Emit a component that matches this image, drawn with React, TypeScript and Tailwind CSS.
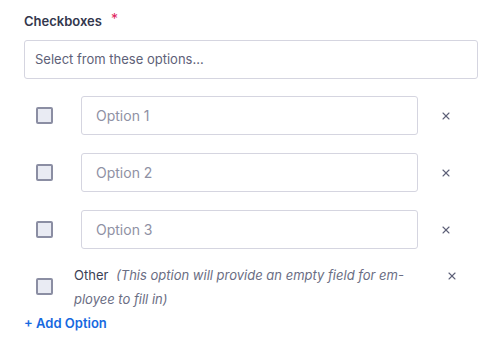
import {X} from 'lucide-react'

const options = ['Option 1', 'Option 2', 'Option 3']

function Box() {
  return <div className="h-[17px] w-[17px] shrink-0 rounded-[2px] border-2 border-[#8b8ea3] bg-[#e9ebf3]" />
}

export default function App() {
  return (
    <div
      className="w-[503px] h-[352px] bg-white px-6 pt-[11px] text-[13px] text-[#2f3347]"
      style={{fontFamily: 'Inter, sans-serif'}}
    >
      <div className="flex items-start gap-[9px] leading-[20px]">
        <span className="font-semibold text-[#33374d]">Checkboxes</span>
        <span className="text-[#e0245e] text-[14px] leading-[16px]">*</span>
      </div>

      <div className="mt-[9px] flex h-[39px] w-[454px] items-center rounded-[3px] border border-[#d5d5e0] px-[10px] text-[#5e6178]">
        Select from these options...
      </div>

      <div className="mt-[17px] flex flex-col gap-[18px]">
        {options.map((o) => (
          <div key={o} className="flex items-center">
            <div className="ml-3 mr-7">
              <Box />
            </div>
            <div className="flex h-[39px] w-[337px] items-center rounded-[3px] border border-[#d5d5e0] px-[14px] text-[14px] text-[#8f91a4]">
              {o}
            </div>
            <X className="ml-[22px] h-[12px] w-[12px] text-[#5e6178]" strokeWidth={2.2} />
          </div>
        ))}
      </div>

      <div className="mt-[14px] flex items-start">
        <div className="ml-3 mt-[15px] mr-[21px]">
          <Box />
        </div>
        <div className="w-[356px] leading-[24px] text-[#3b3f54]">
          Other{' '}
          <span className="ml-1 italic text-[#6b6e84]">
            (This option will provide an empty field for em-
            <br />
            ployee to fill in)
          </span>
        </div>
        <X className="ml-[16px] mt-[7px] h-[12px] w-[12px] text-[#5e6178]" strokeWidth={2.2} />
      </div>

      <div className="mt-[2px] font-semibold text-[#1769e0] leading-[20px]">+ Add Option</div>
    </div>
  )
}
